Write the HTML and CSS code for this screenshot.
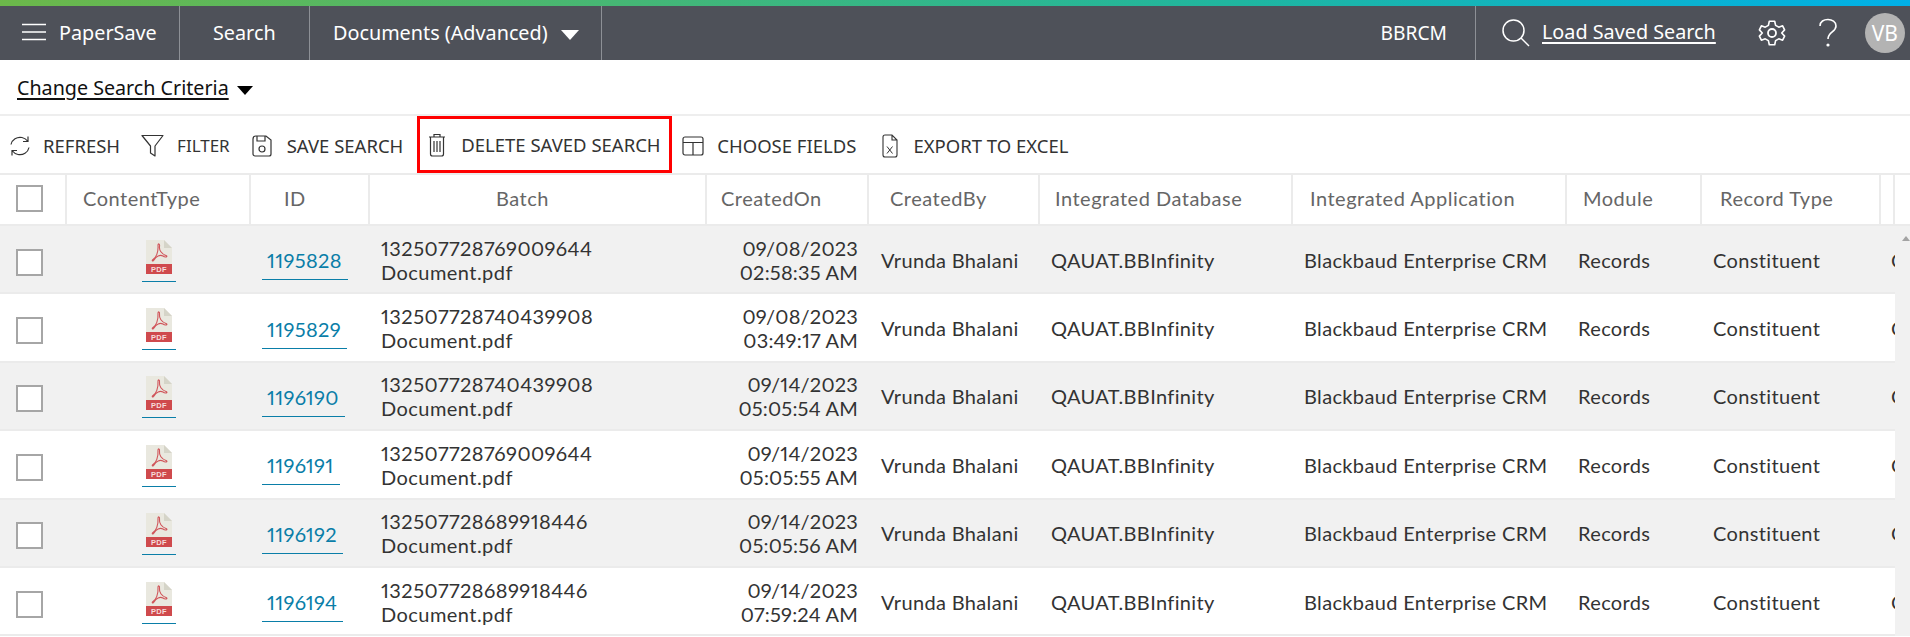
FILE: index.html
```html
<!DOCTYPE html>
<html lang="en">
<head>
<meta charset="utf-8">
<title>PaperSave</title>
<link rel="stylesheet" href="styles.css">
</head>
<body>
<svg class="defs" width="0" height="0" aria-hidden="true">
  <symbol id="pdf" viewBox="0 0 26 34">
    <path d="M0 0H18L26 8V34H0Z" fill="#e9e8df"/>
    <path d="M18 0L26 8H18Z" fill="#d5d4c8"/>
    <rect x="0" y="24" width="26" height="10" fill="#cf4a4d"/>
    <path d="M7 19.500C10 18 12.500 12 12 5.500C12 3 14 3.500 13.500 6.500C13 10 15.500 14 20 15.500C22.500 16.500 19.500 18 17 16C14 14.500 10 16 8 20C6.500 22 5.500 20.500 7 19.500Z" fill="none" stroke="#d0555a" stroke-width="1.100"/>
    <text x="13" y="32" text-anchor="middle" class="pdf-label">PDF</text>
  </symbol>
</svg>
<div class="accent"></div>
<header class="topbar">
  <div class="tb-cell tb-brand">
    <svg class="burger" viewBox="0 0 24 18" width="24" height="18"><path d="M0 1.500H24M0 9H24M0 16.500H24" stroke="#fff" stroke-width="1.600"/></svg>
    <span>PaperSave</span>
  </div>
  <div class="tb-cell tb-search">Search</div>
  <div class="tb-cell tb-docs">Documents (Advanced)<span class="caret caret-white"></span></div>
  <div class="tb-fill"></div>
  <div class="tb-cell tb-org">BBRCM</div>
  <div class="tb-right">
    <svg class="ic-search" viewBox="0 0 30 30" width="30" height="30"><circle cx="12.500" cy="12.500" r="10.500" fill="none" stroke="#fff" stroke-width="1.500"/><path d="M20 20L28 28" stroke="#fff" stroke-width="1.500"/></svg>
    <a class="load-link">Load Saved Search</a>
    <svg class="ic-gear" viewBox="0 0 28 30" width="28" height="30"><path d="M11 2H17L18 6.500L21.500 8.500L25.800 7L28 11.500L24.800 15L28 18.500L25.800 23L21.500 21.500L18 23.500L17 28H11L10 23.500L6.500 21.500L2.200 23L0 18.500L3.200 15L0 11.500L2.200 7L6.500 8.500L10 6.500Z" transform="translate(1.400 1.500) scale(.9)" fill="none" stroke="#fff" stroke-width="1.800" stroke-linejoin="round"/><circle cx="14" cy="15" r="4" fill="none" stroke="#fff" stroke-width="1.800"/></svg>
    <svg class="ic-help" viewBox="0 0 20 30" width="20" height="30"><path d="M2 8C2 -1 18 -.5 18 8C18 14 10 14 10 21" fill="none" stroke="#fff" stroke-width="1.600"/><circle cx="10" cy="27" r="1.600" fill="#fff"/></svg>
    <div class="avatar">VB</div>
  </div>
</header>
<div class="criteria"><a class="criteria-link">Change Search Criteria</a><span class="caret caret-black"></span></div>
<nav class="toolbar">
  <div class="tool t-refresh">
    <svg viewBox="0 0 22 22" width="22" height="22"><path d="M2 9.500C3 4.500 8 1.500 13 2.500C15.500 3 17.500 4.500 19 6.500M19 1.500V6.500H14M20 12.500C19 17.500 14 20.500 9 19.500C6.500 19 4.500 17.500 3 15.500M3 20.500V15.500H8" fill="none" stroke="#333" stroke-width="1.200"/></svg>
    <span>REFRESH</span>
  </div>
  <div class="tool t-filter">
    <svg viewBox="0 0 23 24" width="23" height="24"><path d="M1 1.500H22L14 12V22L9.500 19V12Z" fill="none" stroke="#333" stroke-width="1.200" stroke-linejoin="round"/></svg>
    <span>FILTER</span>
  </div>
  <div class="tool t-save">
    <svg viewBox="0 0 20 24" width="20" height="24"><path d="M4 2H14L19 6V20C19 21 18 22 17 22H3C2 22 1 21 1 20V5C1 3 2 2 4 2ZM5 2V7H13V2" fill="none" stroke="#333" stroke-width="1.200"/><circle cx="10" cy="15" r="3" fill="none" stroke="#333" stroke-width="1.200"/></svg>
    <span>SAVE SEARCH</span>
  </div>
  <div class="tool t-delete">
    <svg viewBox="0 0 18 24" width="18" height="24"><path d="M1 4H17M6 4V1.500H12V4M2.500 4V21C2.500 22 3.500 23 4.500 23H13.500C14.500 23 15.500 22 15.500 21V4M6 8V19M9 8V19M12 8V19" fill="none" stroke="#333" stroke-width="1.200"/></svg>
    <span>DELETE SAVED SEARCH</span>
  </div>
  <div class="tool t-choose">
    <svg viewBox="0 0 22 22" width="22" height="22"><rect x="1" y="2" width="20" height="18" rx="2" fill="none" stroke="#333" stroke-width="1.200"/><path d="M1 7.500H21M11 7.500V20" fill="none" stroke="#333" stroke-width="1.200"/></svg>
    <span>CHOOSE FIELDS</span>
  </div>
  <div class="tool t-export">
    <svg viewBox="0 0 16 24" width="16" height="24"><path d="M1 3C1 2 2 1 3 1H10L15 6V21C15 22 14 23 13 23H3C2 23 1 22 1 21ZM10 1V6H15" fill="none" stroke="#333" stroke-width="1.100"/><path d="M5 12.500L10.500 19.500M10.500 12.500L5 19.500" stroke="#333" stroke-width="1"/></svg>
    <span>EXPORT TO EXCEL</span>
  </div>
</nav>
<section class="grid">
  <div class="row head">
    <div class="cell"><span class="box"></span></div>
    <div class="cell c-type">ContentType</div>
    <div class="cell c-id">ID</div>
    <div class="cell c-batch">Batch</div>
    <div class="cell c-on">CreatedOn</div>
    <div class="cell c-by">CreatedBy</div>
    <div class="cell c-db">Integrated Database</div>
    <div class="cell c-app">Integrated Application</div>
    <div class="cell c-mod">Module</div>
    <div class="cell c-rec">Record Type</div>
    <div class="cell"></div>
  </div>
  <div class="body">
    <div class="rows">
      <div class="row odd">
        <div class="cell"><span class="box"></span></div>
        <div class="cell d-type"><a class="pdf"><svg width="26" height="34"><use href="#pdf"/></svg></a></div>
        <div class="cell d-id"><a class="id">1195828</a></div>
        <div class="cell d-batch">132507728769009644<br>Document.pdf</div>
        <div class="cell d-on">09/08/2023<br>02:58:35 AM</div>
        <div class="cell d-by">Vrunda Bhalani</div>
        <div class="cell d-db">QAUAT.BBInfinity</div>
        <div class="cell d-app">Blackbaud Enterprise CRM</div>
        <div class="cell d-mod">Records</div>
        <div class="cell d-rec">Constituent</div>
        <div class="cell d-last">Constituent</div>
      </div>
      <div class="row">
        <div class="cell"><span class="box"></span></div>
        <div class="cell d-type"><a class="pdf"><svg width="26" height="34"><use href="#pdf"/></svg></a></div>
        <div class="cell d-id"><a class="id">1195829</a></div>
        <div class="cell d-batch">132507728740439908<br>Document.pdf</div>
        <div class="cell d-on">09/08/2023<br>03:49:17 AM</div>
        <div class="cell d-by">Vrunda Bhalani</div>
        <div class="cell d-db">QAUAT.BBInfinity</div>
        <div class="cell d-app">Blackbaud Enterprise CRM</div>
        <div class="cell d-mod">Records</div>
        <div class="cell d-rec">Constituent</div>
        <div class="cell d-last">Constituent</div>
      </div>
      <div class="row odd">
        <div class="cell"><span class="box"></span></div>
        <div class="cell d-type"><a class="pdf"><svg width="26" height="34"><use href="#pdf"/></svg></a></div>
        <div class="cell d-id"><a class="id">1196190</a></div>
        <div class="cell d-batch">132507728740439908<br>Document.pdf</div>
        <div class="cell d-on">09/14/2023<br>05:05:54 AM</div>
        <div class="cell d-by">Vrunda Bhalani</div>
        <div class="cell d-db">QAUAT.BBInfinity</div>
        <div class="cell d-app">Blackbaud Enterprise CRM</div>
        <div class="cell d-mod">Records</div>
        <div class="cell d-rec">Constituent</div>
        <div class="cell d-last">Constituent</div>
      </div>
      <div class="row">
        <div class="cell"><span class="box"></span></div>
        <div class="cell d-type"><a class="pdf"><svg width="26" height="34"><use href="#pdf"/></svg></a></div>
        <div class="cell d-id"><a class="id">1196191</a></div>
        <div class="cell d-batch">132507728769009644<br>Document.pdf</div>
        <div class="cell d-on">09/14/2023<br>05:05:55 AM</div>
        <div class="cell d-by">Vrunda Bhalani</div>
        <div class="cell d-db">QAUAT.BBInfinity</div>
        <div class="cell d-app">Blackbaud Enterprise CRM</div>
        <div class="cell d-mod">Records</div>
        <div class="cell d-rec">Constituent</div>
        <div class="cell d-last">Constituent</div>
      </div>
      <div class="row odd">
        <div class="cell"><span class="box"></span></div>
        <div class="cell d-type"><a class="pdf"><svg width="26" height="34"><use href="#pdf"/></svg></a></div>
        <div class="cell d-id"><a class="id">1196192</a></div>
        <div class="cell d-batch">132507728689918446<br>Document.pdf</div>
        <div class="cell d-on">09/14/2023<br>05:05:56 AM</div>
        <div class="cell d-by">Vrunda Bhalani</div>
        <div class="cell d-db">QAUAT.BBInfinity</div>
        <div class="cell d-app">Blackbaud Enterprise CRM</div>
        <div class="cell d-mod">Records</div>
        <div class="cell d-rec">Constituent</div>
        <div class="cell d-last">Constituent</div>
      </div>
      <div class="row">
        <div class="cell"><span class="box"></span></div>
        <div class="cell d-type"><a class="pdf"><svg width="26" height="34"><use href="#pdf"/></svg></a></div>
        <div class="cell d-id"><a class="id">1196194</a></div>
        <div class="cell d-batch">132507728689918446<br>Document.pdf</div>
        <div class="cell d-on">09/14/2023<br>07:59:24 AM</div>
        <div class="cell d-by">Vrunda Bhalani</div>
        <div class="cell d-db">QAUAT.BBInfinity</div>
        <div class="cell d-app">Blackbaud Enterprise CRM</div>
        <div class="cell d-mod">Records</div>
        <div class="cell d-rec">Constituent</div>
        <div class="cell d-last">Constituent</div>
      </div>
    </div>
    <aside class="scrollbar"><span class="sb-up"></span></aside>
  </div>
</section>
</body>
</html>
```
FILE: styles.css
```css
* { box-sizing: border-box; }
html, body { margin: 0; height: 100%; }
body {
  width: 1910px;
  height: 637px;
  overflow: hidden;
  background: #fff;
  color: #333;
  font-family: "Noto Sans", "Liberation Sans", sans-serif;
}
.defs { position: absolute; }
.pdf-label { font: 700 7.500px "Liberation Sans", sans-serif; fill: #f6dcdc; letter-spacing: .3px; }

.accent { height: 6px; background: linear-gradient(90deg, #6cb84a 0%, #1fb6a0 65%, #00b0e8 100%); }

.topbar {
  height: 54px;
  display: flex;
  align-items: stretch;
  background: #4e5159;
  color: #fff;
  font-size: 19.800px;
}
.tb-cell { display: flex; align-items: center; padding-bottom: 2px; border-right: 1px solid #8d9096; }
.tb-brand { width: 180px; padding-left: 22px; gap: 13px; }
.tb-search { width: 130px; padding-left: 33px; }
.tb-docs { width: 292px; padding-left: 23px; }
.tb-fill { flex: 1; }
.tb-org { padding-right: 28px; font-size: 19.200px; }
.tb-right { width: 434px; display: flex; align-items: center; padding-left: 25px; }
.load-link { margin: 0 0 4px 11px; text-decoration: underline; text-decoration-thickness: 1.500px; text-underline-offset: 3px; }
.ic-gear { margin-left: 42px; }
.ic-help { margin-left: 32px; }
.avatar {
  width: 40px;
  height: 40px;
  margin-left: 27px;
  border-radius: 50%;
  background: #b3b3b3;
  display: flex;
  align-items: center;
  justify-content: center;
  font-size: 21px;
}
.caret { display: inline-block; width: 0; height: 0; border-left: 9px solid transparent; border-right: 9px solid transparent; }
.caret-white { border-top: 10px solid #fff; margin: 6px 0 0 13px; }
.caret-black { border-top: 9px solid #000; margin: 6px 0 0 8px; border-left-width: 8px; border-right-width: 8px; }

.criteria {
  height: 56px;
  display: flex;
  align-items: center;
  padding-left: 17px;
  font-size: 19.700px;
  color: #111;
  border-bottom: 2px solid #eee;
}
.criteria-link { text-decoration: underline; text-decoration-thickness: 1.500px; text-underline-offset: 3px; }

.toolbar { height: 57px; display: flex; align-items: stretch; font-size: 18.500px; }
.tool { display: flex; align-items: center; gap: 14px; padding-top: 2px; }
.t-refresh { padding-left: 9px; gap: 12px; }
.t-filter { margin-left: 21px; gap: 13px; font-size: 17px; }
.t-save { margin-left: 22px; gap: 15px; }
.t-delete { margin-left: 14px; padding: 0 0 0 8px; width: 255px; border: 3px solid #f00; gap: 15px; }
.t-choose { margin-left: 10px; gap: 13px; }
.t-export { margin-left: 26px; gap: 15px; }

.row {
  display: grid;
  grid-template-columns: 67px 184px 119px 337px 162px 171px 253px 274px 135px 179px 14px;
  border-bottom: 2px solid #ebebeb;
  font-family: "Lato", sans-serif;
  font-size: 20px;
  letter-spacing: .35px;
  font-variant-numeric: proportional-nums;
  font-feature-settings: "pnum" 1;
}
.head { height: 53px; border-top: 2px solid #ebebeb; color: #666; letter-spacing: .5px; }
.head .cell { display: flex; align-items: center; border-right: 2px solid #ebebeb; padding-bottom: 4px; }
.c-type { padding-left: 16px; }
.c-id { padding-left: 33px; }
.c-batch { padding-left: 126px; }
.c-on { padding-left: 14px; }
.c-by { padding-left: 21px; }
.c-db { padding-left: 15px; }
.c-app { padding-left: 17px; }
.c-mod { padding-left: 16px; }
.c-rec { padding-left: 18px; }

.box { display: block; width: 27px; height: 27px; margin-left: 16px; border: 2.500px solid #a6a6a6; background: #fff; }
.head .box { margin-top: 2px; }

.body { display: flex; }
.rows { width: 1895px; overflow: hidden; }
.rows .row { height: 68.400px; line-height: 24px; color: #333; align-items: center; }
.rows .cell { padding-top: 1px; }
.rows .box { margin-top: 5px; }
.rows .odd { background: #f1f1f1; }
.scrollbar { width: 15px; background: #f1f1f1; padding-top: 10px; display: flex; justify-content: flex-end; align-items: flex-start; }
.sb-up { width: 0; height: 0; border-left: 4px solid transparent; border-right: 4px solid transparent; border-bottom: 5px solid #a3a3a3; }

.d-type { display: flex; justify-content: center; }
.rows .d-type { padding-top: 0; }
.pdf { display: block; margin-top: 3px; padding: 0 4px 7px; border-bottom: 1px solid #0a7ea8; }
.pdf svg { display: block; }
.d-id { padding-left: 11px; }
.rows .d-id { padding-top: 0; }
.id { display: inline-block; margin-top: 10px; padding: 0 6px 7px 5px; color: #0a7ea8; border-bottom: 1px solid #0a7ea8; }
.d-batch { padding-left: 11px; white-space: nowrap; letter-spacing: .45px; }
.d-on { text-align: right; padding-right: 11px; letter-spacing: .2px; }
.d-by { padding-left: 12px; white-space: nowrap; }
.d-db { padding-left: 11px; white-space: nowrap; }
.d-app { padding-left: 11px; white-space: nowrap; }
.d-mod { padding-left: 11px; }
.d-rec { padding-left: 11px; }
.d-last { padding-left: 10px; white-space: nowrap; overflow: hidden; }
```
